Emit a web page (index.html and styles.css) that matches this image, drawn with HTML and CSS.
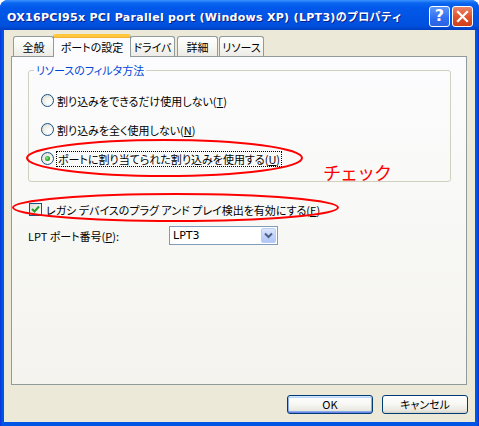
FILE: index.html
```html
<!DOCTYPE html>
<html lang="ja">
<head>
<meta charset="utf-8">
<title>プロパティ</title>
<link rel="stylesheet" href="styles.css">
</head>
<body>
<div class="window">
  <div class="titlebar">
    <span class="title">OX16PCI95x PCI Parallel port (Windows XP) (LPT3)のプロパティ</span>
    <div class="tbtns">
      <span class="tbtn help">?</span>
      <span class="tbtn close"><svg width="13" height="13" viewBox="0 0 13 13"><path d="M2 2 L11 11 M11 2 L2 11" stroke="#fff" stroke-width="2.2" stroke-linecap="square"/></svg></span>
    </div>
  </div>
  <div class="client">
    <div class="tabs">
      <div class="tab t1">全般</div>
      <div class="tab t2 active">ポートの設定</div>
      <div class="tab t3">ドライバ</div>
      <div class="tab t4">詳細</div>
      <div class="tab t5">リソース</div>
    </div>
    <div class="panel">
      <div class="group">
        <span class="legend">リソースのフィルタ方法</span>
        <div class="opt"><span class="radio"></span><span>割り込みをできるだけ使用しない(<u>T</u>)</span></div>
        <div class="opt"><span class="radio"></span><span>割り込みを全く使用しない(<u>N</u>)</span></div>
        <div class="opt"><span class="radio on"></span><span class="focus">ポートに割り当てられた割り込みを使用する(<u>U</u>)</span></div>
      </div>
      <div class="opt chk"><span class="checkbox"><svg width="9" height="9" viewBox="0 0 9 9"><path d="M1 4 L3.5 6.5 L8 1.5" fill="none" stroke="#21A121" stroke-width="2"/></svg></span><span>レガシ デバイスのプラグ アンド プレイ検出を有効にする(<u>E</u>)</span></div>
      <div class="port">
        <span class="plabel">LPT ポート番号(<u>P</u>):</span>
        <div class="combo"><span class="cval">LPT3</span><span class="cbtn"><svg width="9" height="7" viewBox="0 0 9 7"><path d="M1 1.5 L4.5 5 L8 1.5" fill="none" stroke="#4D6185" stroke-width="2"/></svg></span></div>
      </div>
    </div>
    <div class="buttons">
      <span class="btn default">OK</span>
      <span class="btn">キャンセル</span>
    </div>
  </div>
  <svg class="marks" width="479" height="426" viewBox="0 0 479 426">
    <ellipse cx="164.5" cy="158" rx="137.5" ry="18" fill="none" stroke="#F00" stroke-width="2"/>
    <ellipse cx="175.5" cy="207.5" rx="162.5" ry="13.5" fill="none" stroke="#F00" stroke-width="2"/>
  </svg>
  <span class="note">チェック</span>
</div>
</body>
</html>
```
FILE: styles.css
```css
* { box-sizing: border-box; }
html, body { margin: 0; padding: 0; background: #fff; }
body {
  font-family: "Noto Sans CJK JP", "DejaVu Sans", sans-serif;
  font-size: 11px;
  color: #000;
}
.window {
  position: relative;
  width: 479px;
  height: 426px;
  background: linear-gradient(90deg, #0831D9 0, #0055E5 2px, #0055E5 477px, #0831D9 479px);
  border-radius: 8px 8px 0 0;
  padding: 0 4px 4px 4px;
  display: flex;
  flex-direction: column;
}
.titlebar {
  height: 30px;
  margin: 0 -4px;
  padding: 0 6px 0 7px;
  display: flex;
  align-items: center;
  justify-content: space-between;
  border-radius: 8px 8px 0 0;
  background: linear-gradient(180deg, #3D93FF 0, #0A66F0 3px, #0058EA 8px, #0054E3 18px, #0050DD 26px, #003FC0 30px);
}
.title {
  color: #fff;
  font-family: "DejaVu Sans", "Noto Sans CJK JP", sans-serif;
  font-weight: bold;
  font-size: 11px;
  letter-spacing: 0.3px;
  text-shadow: 1px 1px 0 #0A1E8C;
  white-space: nowrap;
  margin-top: 1px;
}
.tbtns { display: flex; gap: 2px; margin-top: 2px; }
.tbtn {
  width: 21px;
  height: 21px;
  border: 1px solid #fff;
  border-radius: 3px;
  display: flex;
  align-items: center;
  justify-content: center;
  color: #fff;
}
.help {
  background: linear-gradient(180deg, #5D97F8 0, #2E6EF0 60%, #2C62E0 100%);
  font-family: "DejaVu Sans", sans-serif;
  font-weight: bold;
  font-size: 16px;
  line-height: 1;
}
.close {
  background: linear-gradient(180deg, #E9866A 0, #E0532D 50%, #CF3F1A 100%);
}
.client {
  flex: 1;
  background: #ECE9D8;
  padding: 5px 8px 0 7px;
  display: flex;
  flex-direction: column;
}
.tabs {
  display: flex;
  align-items: flex-end;
  height: 21px;
  padding-left: 2px;
  position: relative;
  z-index: 1;
}
.tab {
  height: 20px;
  border: 1px solid #919B9C;
  border-bottom: none;
  border-radius: 3px 3px 0 0;
  background: linear-gradient(180deg, #FFFFFF 0, #F7F7F3 50%, #ECEBE6 100%);
  display: flex;
  align-items: center;
  justify-content: center;
  margin-right: 1px;
  white-space: nowrap;
  line-height: 1;
  padding-top: 1px;
  font-feature-settings: "palt";
}
.t1 { width: 41px; }
.t2 { width: 78px; margin-left: -2px; margin-right: -1px; }
.t3 { width: 45px; margin-right: 2px; }
.t4 { width: 41px; }
.t5 { width: 45px; }
.tab.active {
  height: 23px;
  margin-bottom: -1px;
  background: #FCFCFE;
  border-top: 3px solid #FFC83C;
  border-radius: 3px 3px 0 0;
  box-shadow: inset 0 1px 0 #F6B031;
  padding-top: 0;
}
.panel {
  height: 329px;
  border: 1px solid #919B9C;
  background: linear-gradient(180deg, #FCFCFE 0, #F7F7F4 60%, #F4F3EE 100%);
  padding: 13px 15px 0 16px;
  display: flex;
  flex-direction: column;
}
.group {
  position: relative;
  border: 1px solid #D0D0BF;
  border-radius: 3px;
  height: 112px;
  padding: 15px 0 0 12px;
}
.legend {
  position: absolute;
  top: -8px;
  left: 5px;
  padding: 0 2px;
  line-height: 14px;
  color: #0046D5;
  background: #FCFCFE;
  font-feature-settings: "palt";
}
.opt {
  height: 29px;
  display: flex;
  align-items: center;
  gap: 3px;
  white-space: nowrap;
  font-feature-settings: "palt";
  line-height: 14px;
}
.opt u { text-decoration-thickness: 1px; text-underline-offset: 1px; }
.radio {
  width: 13px;
  height: 13px;
  border-radius: 50%;
  border: 1px solid #1C5180;
  background: radial-gradient(circle at 65% 65%, #FFFFFF 0, #F3F3EF 40%, #D6D5CE 100%);
  display: flex;
  align-items: center;
  justify-content: center;
  flex: none;
}
.radio.on::after {
  content: "";
  width: 5px;
  height: 5px;
  border-radius: 50%;
  background: radial-gradient(circle at 40% 40%, #8EF08E 0, #21A121 60%, #0E7E0E 100%);
}
.focus { outline: 1px dotted #000; outline-offset: 0; padding: 0 1px; }
.chk { height: 23px; margin-top: 16px; padding-left: 1px; }
.checkbox {
  width: 13px;
  height: 13px;
  border: 1px solid #1C5180;
  background: linear-gradient(135deg, #DCDCD7 0, #F5F5F2 60%, #FFFFFF 100%);
  display: flex;
  align-items: center;
  justify-content: center;
  flex: none;
  margin-right: 1px;
}
.port {
  display: flex;
  align-items: center;
  margin-top: 5px;
  height: 19px;
}
.plabel {
  width: 141px;
  white-space: nowrap;
  font-feature-settings: "palt";
}
.combo {
  width: 109px;
  height: 19px;
  border: 1px solid #7F9DB9;
  background: #fff;
  display: flex;
  align-items: center;
  justify-content: space-between;
  padding: 0 1px 0 3px;
}
.cval { font-family: "DejaVu Sans", sans-serif; font-size: 11px; }
.cbtn {
  width: 15px;
  height: 15px;
  border: 1px solid #B9CDF7;
  border-radius: 2px;
  background: linear-gradient(180deg, #DCE6FD 0, #C3D3FB 50%, #B1C6F6 100%);
  display: flex;
  align-items: center;
  justify-content: center;
}
.buttons {
  display: flex;
  justify-content: flex-end;
  gap: 9px;
  margin-top: 10px;
  margin-right: -1px;
}
.btn {
  width: 86px;
  height: 19px;
  border: 1px solid #003C74;
  border-radius: 3px;
  background: linear-gradient(180deg, #FFFFFF 0, #F6F6F3 50%, #E9E8E0 85%, #D6D0C5 100%);
  display: flex;
  align-items: center;
  justify-content: center;
  line-height: 1;
  font-feature-settings: "palt";
}
.btn.default {
  box-shadow: inset 0 1px 0 #CEE7FF, inset 0 -1px 0 #6982EE, inset 1px 0 0 #89ADE4, inset -1px 0 0 #89ADE4, inset 0 2px 0 #BCD4F6, inset 0 -2px 0 #89ADE4;
}
.marks {
  position: absolute;
  left: 0;
  top: 0;
  pointer-events: none;
}
.note {
  position: absolute;
  left: 323px;
  top: 160px;
  color: #F00;
  font-size: 18px;
  line-height: 24px;
  letter-spacing: -1px;
}
```
